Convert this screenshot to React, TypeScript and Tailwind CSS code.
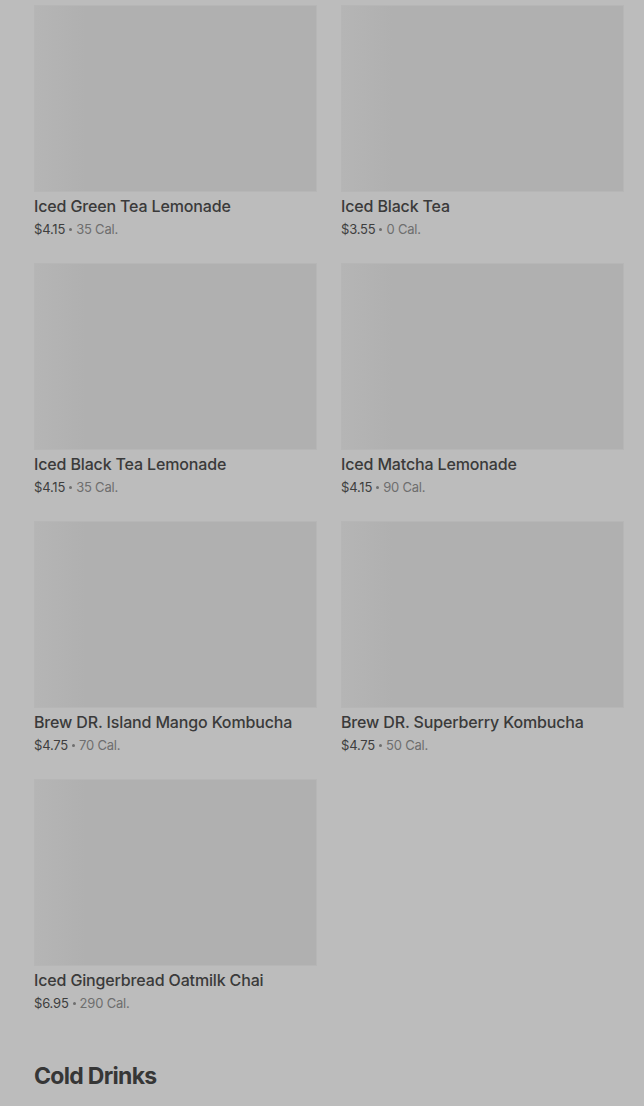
import React from 'react';

interface Item {
  name: string;
  price: string;
  cal: string;
}

const items: Item[] = [
  { name: 'Iced Green Tea Lemonade', price: '$4.15', cal: '35 Cal.' },
  { name: 'Iced Black Tea', price: '$3.55', cal: '0 Cal.' },
  { name: 'Iced Black Tea Lemonade', price: '$4.15', cal: '35 Cal.' },
  { name: 'Iced Matcha Lemonade', price: '$4.15', cal: '90 Cal.' },
  { name: 'Brew DR. Island Mango Kombucha', price: '$4.75', cal: '70 Cal.' },
  { name: 'Brew DR. Superberry Kombucha', price: '$4.75', cal: '50 Cal.' },
  { name: 'Iced Gingerbread Oatmilk Chai', price: '$6.95', cal: '290 Cal.' },
];

function ItemCard({ item }: { item: Item }) {
  return (
    <div className="flex flex-col">
      {/* image placeholder */}
      <div className="h-[187px] w-full border border-[#b6b6b6] bg-[linear-gradient(90deg,#b5b5b5_0%,#b0b0b0_18%,#b0b0b0_100%)]" />
      <div className="mt-[4px] text-[16px] leading-[20px] font-medium text-[#3a3a3a] tracking-[-0.15px]">
        {item.name}
      </div>
      <div className="mt-[5px] flex h-[17px] items-center text-[13px] leading-[17px] tracking-[-0.2px]">
        <span className="text-[#3e3e3e]">{item.price}</span>
        <span className="mx-[4px] h-[3px] w-[3px] rounded-full bg-[#6e6e6e]" />
        <span className="text-[#6e6e6e]">{item.cal}</span>
      </div>
    </div>
  );
}

export default function App() {
  return (
    <div
      className="min-h-[1106px] w-[644px] overflow-hidden bg-[#bcbcbc] pl-[34px] pr-[20px] pt-[5px]"
      style={{ fontFamily: 'Inter, "Noto Sans", sans-serif' }}
    >
      <div className="grid grid-cols-2 gap-x-[24px] gap-y-[25px]">
        {items.map((item) => (
          <ItemCard key={item.name} item={item} />
        ))}
      </div>

      <h2 className="mt-[49px] text-[23px] leading-[30px] font-bold tracking-[-0.7px] text-[#363636]">
        Cold Drinks
      </h2>
    </div>
  );
}
